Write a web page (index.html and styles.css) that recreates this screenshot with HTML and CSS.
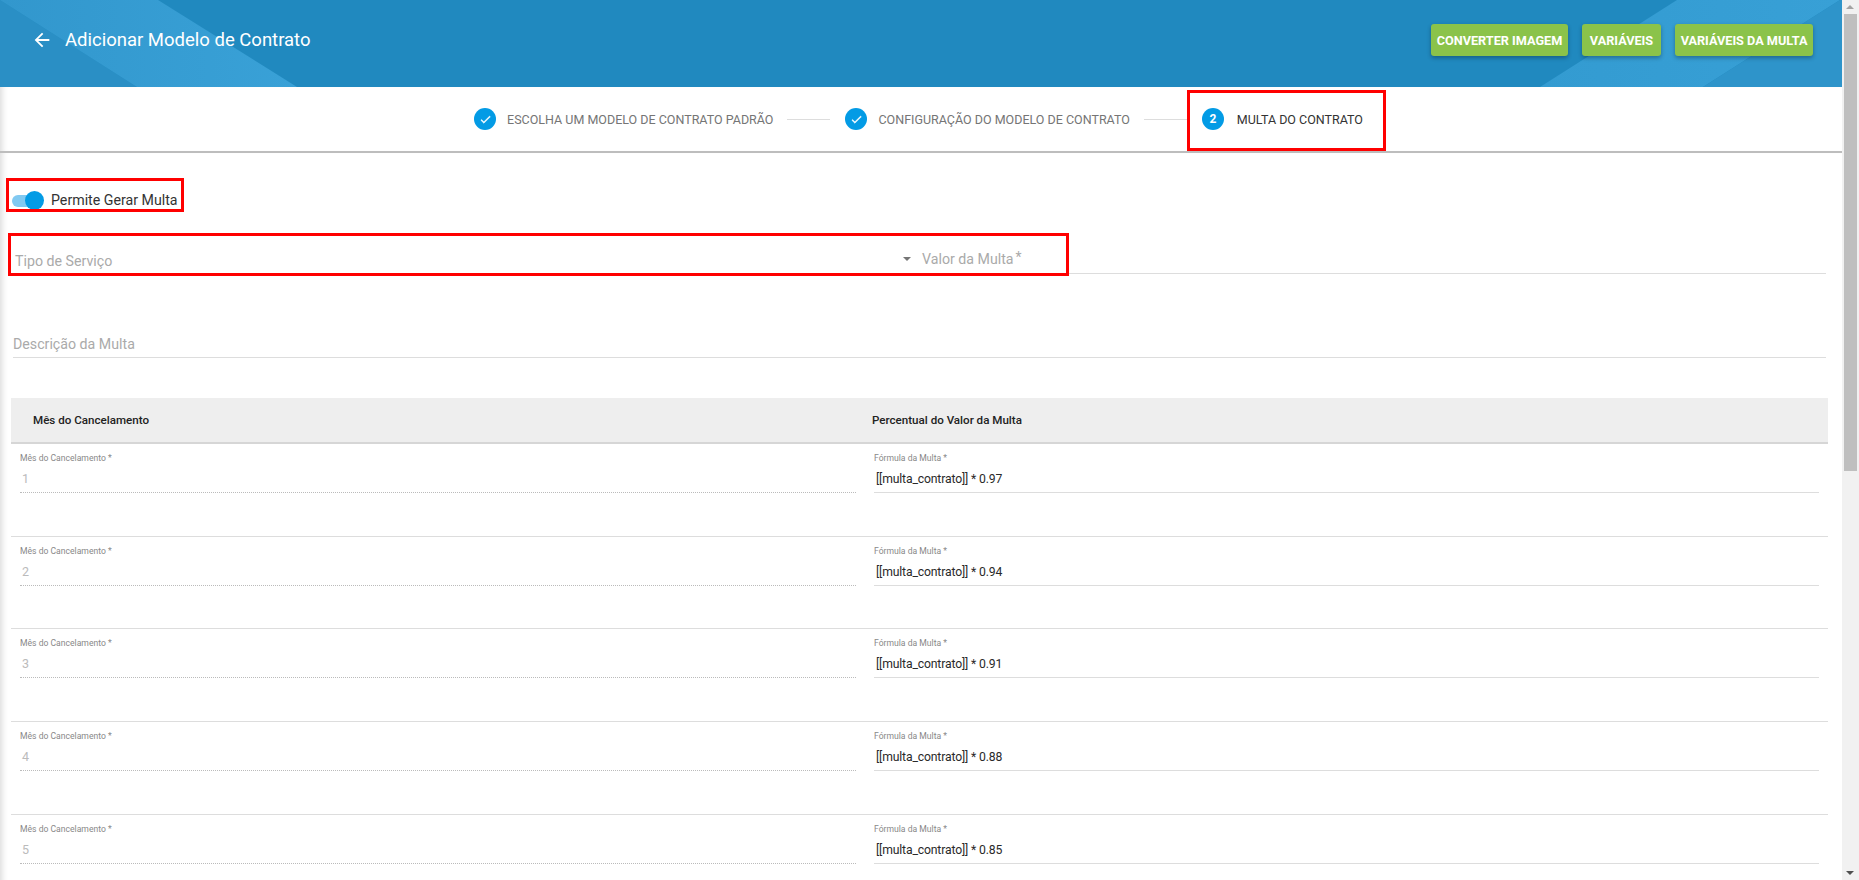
FILE: index.html
```html
<!DOCTYPE html>
<html>
<head>
    <meta charset="utf-8">
    <title>Adicionar Modelo de Contrato</title>
    <link rel="stylesheet" href="styles.css">
</head>
<body>
    <div class="page">
        <div class="content">
            <header class="topbar">
                <svg class="topbar-bg" width="1842" height="87" viewBox="0 0 1842 87">
                    <defs>
                        <linearGradient id="bandLeft" x1="0" y1="0" x2="1" y2="0">
                            <stop offset="0" stop-color="#3297cd"/>
                            <stop offset="1" stop-color="#39a1d7"/>
                        </linearGradient>
                        <linearGradient id="bandRight" x1="0" y1="0" x2="1" y2="0">
                            <stop offset="0" stop-color="#339bd1"/>
                            <stop offset="1" stop-color="#38a0d6"/>
                        </linearGradient>
                    </defs>
                    <polygon points="0,0 137,87 0,87" fill="#2a8fc5"/>
                    <polygon points="0,0 158,0 297,87 137,87" fill="url(#bandLeft)"/>
                    <polygon points="1677,0 1840,0 1703,87 1540,87" fill="url(#bandRight)"/>
                    <polygon points="1840,0 1842,0 1842,87 1703,87" fill="#2e94ca"/>
                </svg>
                <div class="topbar-title">
                    <svg class="back-icon" width="22" height="22" viewBox="0 0 24 24"><path d="M20 11H7.83l5.59-5.59L12 4l-8 8 8 8 1.41-1.41L7.83 13H20z" fill="#fff"/></svg>
                    <h1>Adicionar Modelo de Contrato</h1>
                </div>
                <div class="topbar-actions">
                    <button class="btn">CONVERTER IMAGEM</button>
                    <button class="btn btn-wide">VARIÁVEIS</button>
                    <button class="btn">VARIÁVEIS DA MULTA</button>
                </div>
            </header>

            <nav class="stepper">
                <div class="step">
                    <span class="step-circle"><svg width="13" height="13" viewBox="0 0 24 24"><path d="M9 16.2 4.8 12l-1.4 1.4L9 19 21 7l-1.4-1.4z" fill="#fff" stroke="#fff" stroke-width="0.8"/></svg></span>
                    <span class="step-label">ESCOLHA UM MODELO DE CONTRATO PADRÃO</span>
                </div>
                <span class="step-line"></span>
                <div class="step">
                    <span class="step-circle"><svg width="13" height="13" viewBox="0 0 24 24"><path d="M9 16.2 4.8 12l-1.4 1.4L9 19 21 7l-1.4-1.4z" fill="#fff" stroke="#fff" stroke-width="0.8"/></svg></span>
                    <span class="step-label">CONFIGURAÇÃO DO MODELO DE CONTRATO</span>
                </div>
                <span class="step-line"></span>
                <div class="step step-active">
                    <span class="step-circle">2</span>
                    <span class="step-label">MULTA DO CONTRATO</span>
                    <span class="mark mark-step"></span>
                </div>
            </nav>

            <main class="form">
                <div class="toggle-row">
                    <span class="toggle"><span class="toggle-knob"></span></span>
                    <span class="toggle-text">Permite Gerar Multa</span>
                    <span class="mark mark-toggle"></span>
                </div>

                <div class="fields-row">
                    <div class="field field-select">
                        <span class="placeholder">Tipo de Serviço</span>
                        <span class="caret"></span>
                    </div>
                    <div class="field field-value">
                        <span class="placeholder">Valor da Multa<sup>*</sup></span>
                    </div>
                    <span class="mark mark-fields"></span>
                </div>

                <div class="field field-desc">
                    <span class="placeholder">Descrição da Multa</span>
                </div>

                <div class="table-head">
                    <div>Mês do Cancelamento</div>
                    <div>Percentual do Valor da Multa</div>
                </div>

                <div class="row">
                    <div class="cell cell-month"><label>Mês do Cancelamento *</label><div class="value">1</div></div>
                    <div class="cell cell-formula"><label>Fórmula da Multa *</label><div class="value">[[multa_contrato]] * 0.97</div></div>
                </div>
                <div class="row">
                    <div class="cell cell-month"><label>Mês do Cancelamento *</label><div class="value">2</div></div>
                    <div class="cell cell-formula"><label>Fórmula da Multa *</label><div class="value">[[multa_contrato]] * 0.94</div></div>
                </div>
                <div class="row">
                    <div class="cell cell-month"><label>Mês do Cancelamento *</label><div class="value">3</div></div>
                    <div class="cell cell-formula"><label>Fórmula da Multa *</label><div class="value">[[multa_contrato]] * 0.91</div></div>
                </div>
                <div class="row">
                    <div class="cell cell-month"><label>Mês do Cancelamento *</label><div class="value">4</div></div>
                    <div class="cell cell-formula"><label>Fórmula da Multa *</label><div class="value">[[multa_contrato]] * 0.88</div></div>
                </div>
                <div class="row">
                    <div class="cell cell-month"><label>Mês do Cancelamento *</label><div class="value">5</div></div>
                    <div class="cell cell-formula"><label>Fórmula da Multa *</label><div class="value">[[multa_contrato]] * 0.85</div></div>
                </div>
            </main>
        </div>

        <aside class="scrollbar">
            <span class="scroll-up"></span>
            <span class="scroll-thumb"></span>
            <span class="scroll-down"></span>
        </aside>
    </div>
</body>
</html>
```

FILE: styles.css
```css
* {
    box-sizing: border-box;
}
html, body {
    margin: 0;
    height: 100%;
    overflow: hidden;
}
body {
    font-family: Roboto, "Liberation Sans", sans-serif;
    background-color: #fff;
}
.page {
    display: flex;
    height: 880px;
}
.content {
    flex: 1;
    min-width: 0;
    overflow: hidden;
}

/* barra azul */
.topbar {
    position: relative;
    height: 87px;
    background-color: #2089bf;
    display: flex;
    align-items: center;
    justify-content: space-between;
    padding: 0 29px 7px 31px;
    overflow: hidden;
}
.topbar-bg {
    position: absolute;
    left: 0;
    top: 0;
}
.topbar-title {
    position: relative;
    display: flex;
    align-items: center;
    gap: 12px;
}
.topbar-title h1 {
    margin: 0;
    font-size: 18.5px;
    font-weight: 400;
    color: #fff;
}
.topbar-actions {
    position: relative;
    display: flex;
    gap: 14px;
}
.btn {
    height: 32px;
    padding: 0 5.5px;
    border: 0;
    border-radius: 3px;
    background-color: #8bc34a;
    color: #fff;
    font-family: Roboto, sans-serif;
    font-size: 12.7px;
    font-weight: 700;
    box-shadow: 0 2px 4px rgba(0, 0, 0, 0.3);
}
.btn-wide {
    padding: 0 8px;
}

/* passos */
.stepper {
    display: flex;
    align-items: center;
    justify-content: center;
    height: 66px;
    padding-right: 5px;
    border-bottom: 2px solid #bdbdbd;
    box-shadow: inset 7px 0 6px -5px rgba(0, 0, 0, 0.15);
}
.step {
    position: relative;
    display: flex;
    align-items: center;
    gap: 11px;
}
.step-circle {
    width: 22px;
    height: 22px;
    border-radius: 50%;
    background-color: #039be5;
    color: #fff;
    font-size: 12px;
    font-weight: 700;
    display: flex;
    align-items: center;
    justify-content: center;
}
.step-label {
    font-size: 12.5px;
    font-weight: 400;
    color: #757575;
}
.step-line {
    width: 43px;
    height: 1px;
    margin: 0 15px 0 14px;
    background-color: #ddd;
}
.step-active {
    gap: 13px;
}
.step-active .step-label {
    color: #333;
}

/* marcas vermelhas da captura */
.mark {
    position: absolute;
    border: 3px solid #f00;
    pointer-events: none;
}
.mark-step {
    left: -15px;
    right: -23px;
    top: -18px;
    height: 61px;
}
.mark-toggle {
    left: 6px;
    top: 0;
    width: 178px;
    height: 34px;
}
.mark-fields {
    left: 8px;
    top: 0;
    width: 1061px;
    height: 43px;
}

/* formulario */
.form {
    box-shadow: inset 7px 0 6px -5px rgba(0, 0, 0, 0.15);
    padding-top: 25px;
    padding-right: 16px;
}
.toggle-row {
    position: relative;
    height: 34px;
    display: flex;
    align-items: center;
    padding: 10px 0 0 12px;
    margin-bottom: 21px;
}
.toggle {
    position: relative;
    width: 28px;
    height: 12px;
    border-radius: 6px;
    background-color: #81c9f1;
    margin-right: 11px;
    margin-top: 1px;
}
.toggle-knob {
    position: absolute;
    right: -4px;
    top: -4px;
    width: 19px;
    height: 19px;
    border-radius: 50%;
    background-color: #039be5;
}
.toggle-text {
    font-size: 14.2px;
    color: #333;
}
.fields-row {
    position: relative;
    height: 43px;
    display: flex;
    padding-left: 15px;
}
.field {
    position: relative;
    display: flex;
    align-items: center;
}
.placeholder {
    font-size: 14.2px;
    color: #aaa;
}
.placeholder sup {
    font-size: 14px;
    margin-left: 2px;
    line-height: 0;
    vertical-align: 2px;
}
.field-select {
    width: 905px;
    padding-top: 12px;
}
.caret {
    position: absolute;
    right: 9px;
    top: 24px;
    border-left: 4px solid transparent;
    border-right: 4px solid transparent;
    border-top: 4px solid #757575;
}
.field-value {
    flex: 1;
    padding-top: 11px;
    padding-left: 2px;
    height: 41px;
    border-bottom: 1px solid #ddd;
}
.field-desc {
    margin: 38px 0 0 13px;
    height: 44px;
    padding-top: 17px;
    border-bottom: 1px solid #ddd;
}
.table-head {
    display: flex;
    margin: 40px 0 0 11px;
    width: 1817px;
    height: 46px;
    align-items: center;
    background-color: #eee;
    border-bottom: 2px solid #d6d6d6;
    font-size: 11.6px;
    font-weight: 500;
    color: #222;
}
.table-head div:first-child {
    width: 861px;
    padding-left: 22px;
}
.row {
    display: flex;
    margin-left: 11px;
    width: 1817px;
    height: 92.7px;
    border-bottom: 1px solid #ddd;
}
.cell label {
    display: block;
    font-size: 8.6px;
    line-height: 11px;
    color: #888;
}
.value {
    font-size: 12.2px;
    letter-spacing: -0.15px;
    height: 29px;
    padding: 7px 0 0 2px;
}
.cell-month {
    width: 845px;
    padding: 9px 0 0 9px;
    flex-shrink: 0;
}
.cell-month .value {
    color: #bbb;
    font-size: 12.5px;
    border-bottom: 1px dotted #bbb;
}
.cell-formula {
    margin-left: 18px;
    width: 945px;
    padding-top: 9px;
}
.cell-formula .value {
    color: #2a2a2a;
    padding-top: 8px;
    border-bottom: 1px solid #ddd;
}

/* scrollbar */
.scrollbar {
    position: relative;
    width: 17px;
    flex-shrink: 0;
    background-color: #f1f1f1;
}
.scroll-thumb {
    position: absolute;
    left: 2px;
    right: 2px;
    top: 14px;
    height: 457px;
    background-color: #bfbfbf;
}
.scroll-up, .scroll-down {
    position: absolute;
    left: 4px;
    border-left: 4px solid transparent;
    border-right: 4px solid transparent;
}
.scroll-up {
    top: 5px;
    border-bottom: 4px solid #a3a3a3;
}
.scroll-down {
    bottom: 5px;
    border-top: 4px solid #505050;
}
```
